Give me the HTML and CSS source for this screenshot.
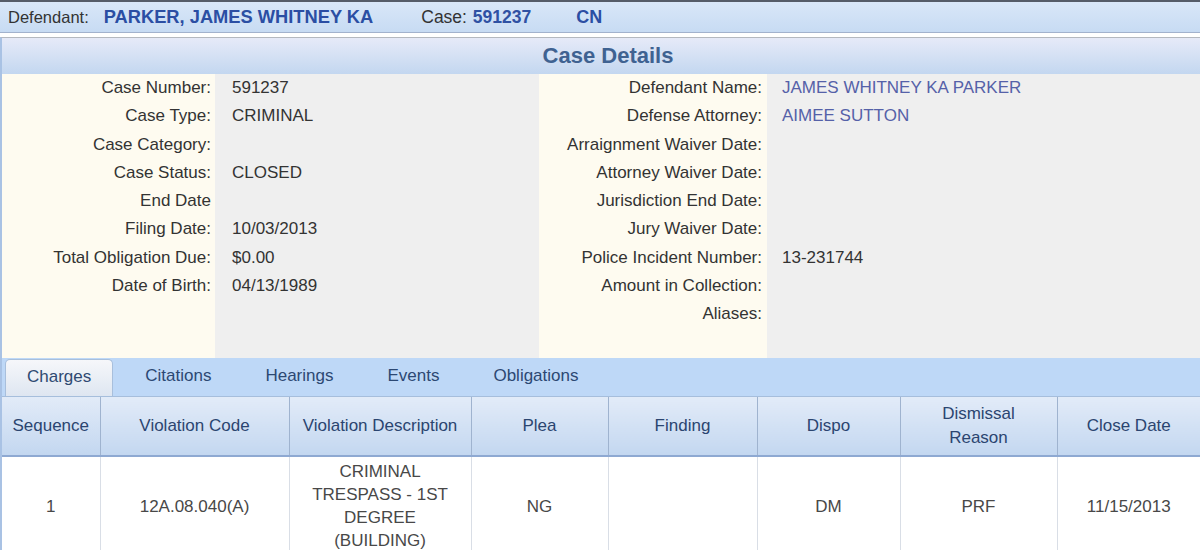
FILE: index.html
```html
<!DOCTYPE html>
<html>
<head>
<meta charset="utf-8">
<link rel="stylesheet" href="styles.css">
</head>
<body>
<div class="topbar">
  <span class="tb-label">Defendant:</span>
  <span class="tb-name">PARKER, JAMES WHITNEY KA</span>
  <span class="tb-label tb-case">Case: <span class="tb-num">591237</span></span>
  <span class="tb-name tb-cn">CN</span>
</div>
<div class="panel">
  <div class="panel-head">Case Details</div>
  <div class="details">
    <div class="col col-label">
      <div class="row">Case Number:</div>
      <div class="row">Case Type:</div>
      <div class="row">Case Category:</div>
      <div class="row">Case Status:</div>
      <div class="row">End Date</div>
      <div class="row">Filing Date:</div>
      <div class="row">Total Obligation Due:</div>
      <div class="row">Date of Birth:</div>
    </div>
    <div class="col col-value">
      <div class="row">591237</div>
      <div class="row">CRIMINAL</div>
      <div class="row"></div>
      <div class="row">CLOSED</div>
      <div class="row"></div>
      <div class="row">10/03/2013</div>
      <div class="row">$0.00</div>
      <div class="row">04/13/1989</div>
    </div>
    <div class="col col-label col-label2">
      <div class="row">Defendant Name:</div>
      <div class="row">Defense Attorney:</div>
      <div class="row">Arraignment Waiver Date:</div>
      <div class="row">Attorney Waiver Date:</div>
      <div class="row">Jurisdiction End Date:</div>
      <div class="row">Jury Waiver Date:</div>
      <div class="row">Police Incident Number:</div>
      <div class="row">Amount in Collection:</div>
      <div class="row">Aliases:</div>
    </div>
    <div class="col col-value col-value2">
      <div class="row link">JAMES WHITNEY KA PARKER</div>
      <div class="row link">AIMEE SUTTON</div>
      <div class="row"></div>
      <div class="row"></div>
      <div class="row"></div>
      <div class="row"></div>
      <div class="row">13-231744</div>
      <div class="row"></div>
      <div class="row"></div>
    </div>
  </div>
  <div class="tabs">
    <div class="tab active">Charges</div>
    <div class="tab">Citations</div>
    <div class="tab">Hearings</div>
    <div class="tab">Events</div>
    <div class="tab">Obligations</div>
  </div>
  <table class="grid">
    <colgroup>
      <col class="c1"><col class="c2"><col class="c3"><col class="c4">
      <col class="c5"><col class="c6"><col class="c7"><col class="c8">
    </colgroup>
    <thead>
      <tr>
        <th>Sequence</th>
        <th>Violation Code</th>
        <th>Violation Description</th>
        <th>Plea</th>
        <th>Finding</th>
        <th>Dispo</th>
        <th>Dismissal<br>Reason</th>
        <th>Close Date</th>
      </tr>
    </thead>
    <tbody>
      <tr>
        <td>1</td>
        <td>12A.08.040(A)</td>
        <td>CRIMINAL<br>TRESPASS - 1ST<br>DEGREE<br>(BUILDING)</td>
        <td>NG</td>
        <td></td>
        <td>DM</td>
        <td>PRF</td>
        <td>11/15/2013</td>
      </tr>
    </tbody>
  </table>
</div>
</body>
</html>
```

FILE: styles.css
```css
* { box-sizing: border-box; }
html, body { margin: 0; padding: 0; }
body {
  width: 1200px;
  height: 550px;
  overflow: hidden;
  background: #ffffff;
  font-family: "Liberation Sans", Arial, sans-serif;
  font-size: 17px;
  color: #333333;
}
.topbar {
  height: 33px;
  border-top: 2px solid #555c68;
  border-bottom: 1px solid #a2b2cd;
  background: linear-gradient(#d9e7f8, #c7dbf3);
  display: flex;
  align-items: center;
  padding-left: 8px;
  font-size: 16.5px;
}
.tb-label { color: #333333; }
.tb-name {
  color: #2b4ea3;
  font-weight: bold;
  font-size: 18.3px;
  margin-left: 15px;
}
.tb-case { margin-left: 48px; font-size: 17.5px; }
.tb-num { color: #2f51a3; font-weight: bold; margin-left: 1px; }
.tb-cn { margin-left: 45px; font-size: 18px; }

.panel {
  margin-top: 4px;
  border-top: 1px solid #b4b8bf;
  border-left: 2px solid #a9c2e4;
}
.panel-head {
  height: 36px;
  background: linear-gradient(#e6eaf8, #c3d7f0);
  color: #3f6291;
  font-weight: bold;
  font-size: 22px;
  display: flex;
  align-items: center;
  justify-content: center;
  padding-left: 14px;
}
.details {
  display: grid;
  grid-template-columns: 213px 324px 228px 1fr;
  height: 284px;
}
.col { padding-bottom: 30px; }
.col-label { background: #fefbf0; text-align: right; padding-right: 4px; }
.col-value { background: #efefef; padding-left: 17px; }
.col-value2 { padding-left: 15px; }
.col-label2 { padding-right: 5px; }
.row {
  height: 28.25px;
  line-height: 28.25px;
  white-space: nowrap;
}
.link { color: #5561a8; }

.tabs {
  height: 39px;
  background: #bed8f7;
  display: flex;
  align-items: flex-end;
  gap: 10px;
  padding-left: 3px;
  border-bottom: 1px solid #a6bedc;
}
.tab {
  height: 37px;
  padding: 0 22px;
  display: flex;
  align-items: center;
  padding-bottom: 3px;
  color: #2c4873;
  font-size: 17px;
}
.tab.active {
  background: linear-gradient(#f6f7fa, #dee6f1);
  border: 1px solid #a8bfdc;
  border-bottom: none;
  border-radius: 5px 5px 0 0;
  color: #2f4a72;
  padding: 0 21px 3px;
}

.grid {
  border-collapse: collapse;
  table-layout: fixed;
  width: 1198px;
}
.c1 { width: 98px; }
.c2 { width: 189px; }
.c3 { width: 182px; }
.c4 { width: 137px; }
.c5 { width: 149px; }
.c6 { width: 143px; }
.c7 { width: 157px; }
.c8 { width: 143px; }
.grid th {
  height: 59px;
  background: linear-gradient(#e2ebf8, #c3d7f0);
  border-left: 1px solid #9fb3cf;
  border-bottom: 2px solid #8ea9d2;
  color: #2b4570;
  font-weight: normal;
  font-size: 17px;
  line-height: 24px;
  text-align: center;
  padding: 0;
}
.grid th:first-child, .grid td:first-child { border-left: none; }
.grid td {
  border-left: 1px solid #d9dee6;
  text-align: center;
  color: #484848;
  font-size: 17px;
  line-height: 23px;
  padding: 3px 0 8px;
  vertical-align: middle;
  background: #ffffff;
}
```
